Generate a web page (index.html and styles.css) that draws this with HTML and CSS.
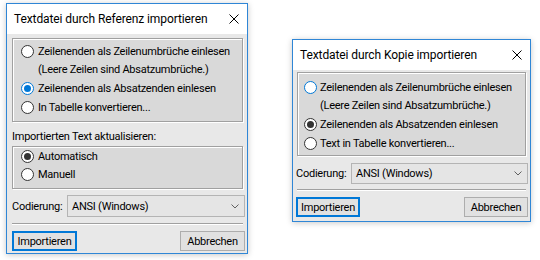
FILE: index.html
```html
<!DOCTYPE html>
<html>
	<head>
		<title>Textdatei importieren</title>
		<meta charset="UTF-8">
		<meta name="viewport" content="width=device-width, initial-scale=1.0">
		<link rel="stylesheet" href="styles.css">
	</head>
	<body>
		<div class="desk">
			<!-- Dialog 1: Referenz -->
			<div class="dlg dlg-ref">
				<div class="titlebar">
					<span class="title">Textdatei durch Referenz importieren</span>
					<svg class="close" width="10" height="10" viewBox="0 0 10 10"><path d="M0.5 0.5 L9.5 9.5 M9.5 0.5 L0.5 9.5" stroke="#000" stroke-width="1" fill="none"/></svg>
				</div>
				<div class="dlg-body">
					<div class="group group-modus">
						<div class="opt"><span class="radio"></span><span>Zeilenenden als Zeilenumbrüche einlesen<br>(Leere Zeilen sind Absatzumbrüche.)</span></div>
						<div class="opt"><span class="radio checked focus"></span><span>Zeilenenden als Absatzenden einlesen</span></div>
						<div class="opt"><span class="radio"></span><span>In Tabelle konvertieren...</span></div>
					</div>
					<div class="caption">Importierten Text aktualisieren:</div>
					<div class="group group-update">
						<div class="opt"><span class="radio checked"></span><span>Automatisch</span></div>
						<div class="opt"><span class="radio"></span><span>Manuell</span></div>
					</div>
					<div class="field">
						<span class="field-label">Codierung:</span>
						<div class="select">
							<span>ANSI (Windows)</span>
							<svg width="8" height="5" viewBox="0 0 8 5"><path d="M0.5 0.5 L4 4 L7.5 0.5" stroke="#606060" fill="none"/></svg>
						</div>
					</div>
					<div class="sep"></div>
					<div class="buttons">
						<div class="btn btn-default">Importieren</div>
						<div class="btn">Abbrechen</div>
					</div>
				</div>
			</div>

			<!-- Dialog 2: Kopie -->
			<div class="dlg dlg-copy">
				<div class="titlebar">
					<span class="title">Textdatei durch Kopie importieren</span>
					<svg class="close" width="10" height="10" viewBox="0 0 10 10"><path d="M0.5 0.5 L9.5 9.5 M9.5 0.5 L0.5 9.5" stroke="#000" stroke-width="1" fill="none"/></svg>
				</div>
				<div class="dlg-body">
					<div class="group group-modus">
						<div class="opt"><span class="radio focus"></span><span>Zeilenenden als Zeilenumbrüche einlesen<br>(Leere Zeilen sind Absatzumbrüche.)</span></div>
						<div class="opt"><span class="radio checked"></span><span>Zeilenenden als Absatzenden einlesen</span></div>
						<div class="opt"><span class="radio"></span><span>Text in Tabelle konvertieren...</span></div>
					</div>
					<div class="field">
						<span class="field-label">Codierung:</span>
						<div class="select">
							<span>ANSI (Windows)</span>
							<svg width="8" height="5" viewBox="0 0 8 5"><path d="M0.5 0.5 L4 4 L7.5 0.5" stroke="#606060" fill="none"/></svg>
						</div>
					</div>
					<div class="sep"></div>
					<div class="buttons">
						<div class="btn btn-default">Importieren</div>
						<div class="btn">Abbrechen</div>
					</div>
				</div>
			</div>
		</div>
	</body>
</html>
```

FILE: styles.css
```css
body {
	margin: 0;
	background: #fff;
	font-family: Roboto, "Liberation Sans", sans-serif;
	font-size: 11px;
	letter-spacing: -0.25px;
	color: #000;
}
.desk {
	display: flex;
	align-items: flex-start;
	width: 540px;
	height: 260px;
	padding: 3px 0 0 6px;
	box-sizing: border-box;
}
.dlg {
	display: flex;
	flex-direction: column;
	border: 1px solid #2f86d6;
	background: #e8e8e8;
	box-shadow: 0 1px 6px rgba(0,0,0,0.22);
	white-space: nowrap;
}
.dlg-ref {
	width: 242px;
	box-sizing: border-box;
}
.dlg-copy {
	width: 239px;
	box-sizing: border-box;
	margin-left: 44px;
	margin-top: 36px;
}
.titlebar {
	display: flex;
	align-items: center;
	justify-content: space-between;
	height: 30px;
	padding: 0 8px 0 7px;
	background: #fff;
}
.title {
	font-size: 12px;
	letter-spacing: -0.1px;
	padding-bottom: 1px;
}
.close {
	display: block;
}
.dlg-body {
	display: flex;
	flex-direction: column;
	padding: 4px 2px 2px 5px;
}
.dlg-copy .dlg-body {
	padding: 2px 2px 4px 4px;
}
.group {
	display: flex;
	flex-direction: column;
	gap: 1px;
	margin-right: 2px;
	border: 1px solid #a0a0a0;
	box-shadow: inset 1px 1px 0 #fff, 1px 1px 0 #fff;
	background: #d9d9d9;
}
.group-modus {
	padding: 4px 8px 4px 8px;
}
.dlg-copy .group-modus {
	padding: 6px 6px 2px 6px;
}
.group-update {
	gap: 0;
	padding: 1px 8px 4px 8px;
}
.opt {
	display: flex;
	align-items: flex-start;
	line-height: 18px;
}
.radio {
	position: relative;
	flex: none;
	width: 11px;
	height: 11px;
	margin: 2px 4px 0 0;
	border: 1px solid #333;
	border-radius: 50%;
	background: #fff;
}
.dlg-copy .radio {
	margin-right: 3px;
}
.radio.focus {
	border-color: #0078d7;
}
.radio.checked::after {
	content: "";
	position: absolute;
	top: 2px;
	left: 2px;
	width: 7px;
	height: 7px;
	border-radius: 50%;
	background: #333;
}
.radio.checked.focus::after {
	background: #0078d7;
}
.caption {
	margin-top: 6px;
	line-height: 18px;
}
.field {
	display: flex;
	align-items: center;
	margin-top: 6px;
}
.dlg-copy .field {
	margin-top: 7px;
	margin-left: -1px;
}
.field-label {
	width: 55px;
	flex: none;
}
.select {
	flex: 1;
	display: flex;
	align-items: center;
	justify-content: space-between;
	height: 22px;
	box-sizing: border-box;
	padding: 0 5px 0 4px;
	border: 1px solid #b4b4b4;
	background: #e5e5e5;
}
.dlg-copy .select {
	height: 21px;
}
.sep {
	margin: 6px 2px 0 0;
	border-top: 1px solid #a0a0a0;
	border-bottom: 1px solid #fff;
}
.dlg-copy .sep {
	margin-top: 5px;
}
.buttons {
	display: flex;
	justify-content: space-between;
	margin-top: 6px;
}
.btn {
	width: 65px;
	height: 20px;
	box-sizing: border-box;
	display: flex;
	align-items: center;
	justify-content: center;
	border: 1px solid #adadad;
	background: #e1e1e1;
}
.dlg-copy .btn {
	width: 64px;
}
.dlg-copy .btn-default {
	margin-left: -1px;
}
.btn-default {
	border: 2px solid #0078d7;
}
```
